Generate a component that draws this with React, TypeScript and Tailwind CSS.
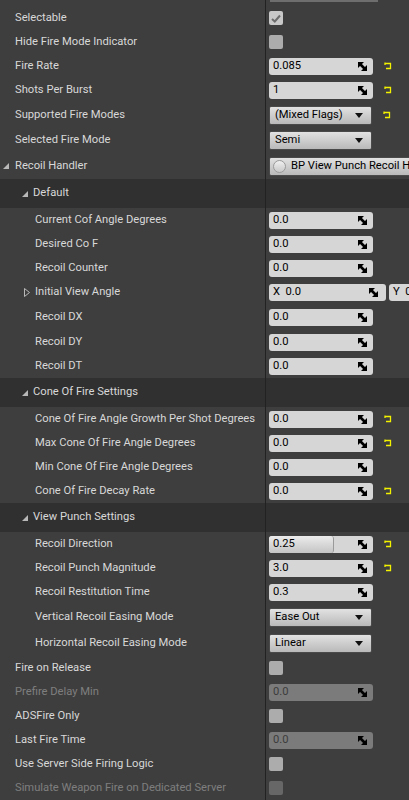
import React from "react";

type RowProps = {
    label?: string;
    indent?: number;
    disabled?: boolean;
    arrow?: "open" | "closed";
    height?: number;
    children?: React.ReactNode;
    reset?: boolean;
};

const font = { fontFamily: "Roboto, 'Noto Sans', sans-serif" };

const SpinIcon = () => (
    <svg width="9" height="9" viewBox="0 0 9 9" className="shrink-0">
        <polygon points="0,0 6,0 0,6" fill="#000" />
        <polygon points="9,9 3,9 9,3" fill="#000" />
        <line x1="1.5" y1="1.5" x2="7.5" y2="7.5" stroke="#000" strokeWidth="2.6" />
    </svg>
);

const ResetIcon = () => (
    <svg width="8" height="8" viewBox="0 0 8 8" className="shrink-0">
        <path d="M1 0.5 V3 M1 1.5 H6.5 V6.5 H2" fill="none" stroke="#f2f200" strokeWidth="1.3" />
    </svg>
);

const OpenArrow = () => (
    <svg width="6" height="6" viewBox="0 0 6 6" className="shrink-0">
        <polygon points="6,0 6,6 0,6" fill="#b8b8b8" />
    </svg>
);

const ClosedArrow = () => (
    <svg width="6" height="9" viewBox="0 0 6 9" className="shrink-0">
        <polygon points="0.5,0.5 5.5,4.5 0.5,8.5" fill="none" stroke="#b8b8b8" strokeWidth="1" />
    </svg>
);

const NumField = ({ value, disabled, fill }: { value: string; disabled?: boolean; fill?: number }) => (
    <div
        className={`relative flex items-center h-[17px] w-[104px] rounded-[3px] overflow-hidden ${disabled ? "bg-[#7b7b7b]" : "bg-[#d6d6d6]"}`}
    >
        {fill !== undefined && (
            <div
                className="absolute left-0 top-0 bottom-0 rounded-r-[3px] border-r border-[#9a9a9a] bg-gradient-to-b from-[#ececec] to-[#c4c4c4]"
                style={{ width: `${fill}px` }}
            />
        )}
        <span className={`relative pl-[4px] flex-1 text-[11.2px] ${disabled ? "text-[#3c3c3c]" : "text-black"}`}>{value}</span>
        <span className="relative pr-[6px] flex items-center">
            <SpinIcon />
        </span>
    </div>
);

const Dropdown = ({ value }: { value: string }) => (
    <div className="flex items-center h-[19px] w-[103px] rounded-[2px] border border-[#4a4a4a] bg-gradient-to-b from-[#e2e2e2] to-[#b9b9b9]">
        <span className="pl-[5px] flex-1 text-[11.2px] text-black">{value}</span>
        <svg width="8" height="5" viewBox="0 0 8 5" className="mr-[8px]">
            <polygon points="0,0 8,0 4,5" fill="#111" />
        </svg>
    </div>
);

const Check = ({ checked, disabled }: { checked?: boolean; disabled?: boolean }) => (
    <div
        className={`flex items-center justify-center w-[14px] h-[14px] rounded-[2px] ${disabled ? "bg-[#676767]" : checked ? "bg-[#c8c8c8]" : "bg-[#acacac]"}`}
    >
        {checked && (
            <svg width="10" height="9" viewBox="0 0 10 9">
                <path d="M1 5 L3.8 7.5 L9 1.5" fill="none" stroke="#6c6c6c" strokeWidth="2" />
            </svg>
        )}
    </div>
);

const Row = ({ label, indent = 15, disabled, arrow, height = 24, children, reset }: RowProps) => (
    <div className="flex bg-[#3e3e3e]" style={{ height }}>
        <div className="w-[265px] shrink-0 flex items-center" style={{ paddingLeft: indent }}>
            {arrow === "closed" && (
                <span className="-ml-[11px] mr-[5px] flex items-center">
                    <ClosedArrow />
                </span>
            )}
            {arrow === "open" && (
                <span className="-ml-[12px] mr-[6px] flex items-center">
                    <OpenArrow />
                </span>
            )}
            <span className={`text-[11.2px] whitespace-nowrap ${disabled ? "text-[#7e7e7e]" : "text-[#d8d8d8]"}`}>{label}</span>
        </div>
        <div className="w-px shrink-0 bg-[#222222]" />
        <div className="flex-1 flex items-center pl-[3px] whitespace-nowrap">
            {children}
            {reset && (
                <span className="ml-[11px] flex items-center">
                    <ResetIcon />
                </span>
            )}
        </div>
    </div>
);

const Category = ({ label }: { label: string }) => (
    <div className="flex h-[29px] bg-[#303030]">
        <div className="w-[265px] shrink-0 flex items-center pl-[22px]">
            <OpenArrow />
            <span className="ml-[5px] text-[11.2px] text-[#d8d8d8]">{label}</span>
        </div>
        <div className="w-px shrink-0 bg-[#222222]" />
        <div className="flex-1" />
    </div>
);

export default function App() {
    return (
        <div className="w-[409px] h-[800px] overflow-hidden bg-[#3e3e3e]" style={font}>
            {/* row cut off above */}
            <div className="flex h-[6px]">
                <div className="w-[265px] shrink-0" />
                <div className="w-px shrink-0 bg-[#222222]" />
                <div className="flex-1 pl-[4px]">
                    <div className="h-[2px] w-[108px] bg-[#6e6e6e]" />
                </div>
            </div>
            <Row label="Selectable"><Check checked /></Row>
            <Row label="Hide Fire Mode Indicator"><Check /></Row>
            <Row label="Fire Rate" reset><NumField value="0.085" /></Row>
            <Row label="Shots Per Burst" reset><NumField value="1" /></Row>
            <Row label="Supported Fire Modes" height={26} reset><Dropdown value="(Mixed Flags)" /></Row>
            <Row label="Selected Fire Mode" height={25}><Dropdown value="Semi" /></Row>
            <Row label="Recoil Handler" height={26} arrow="open">
                <div className="flex items-center h-[19px] w-[200px] shrink-0 rounded-[2px] border border-[#4a4a4a] bg-gradient-to-b from-[#e2e2e2] to-[#b9b9b9]">
                    <span className="ml-[3px] w-[13px] h-[13px] rounded-full border border-[#9a9a9a] bg-gradient-to-b from-[#f0f0f0] to-[#c8c8c8]" />
                    <span className="ml-[5px] text-[11.2px] text-black">BP View Punch Recoil Handler</span>
                </div>
            </Row>
            <Category label="Default" />
            <Row label="Current Cof Angle Degrees" indent={35}><NumField value="0.0" /></Row>
            <Row label="Desired Co F" indent={35}><NumField value="0.0" /></Row>
            <Row label="Recoil Counter" indent={35}><NumField value="0.0" /></Row>
            <Row label="Initial View Angle" indent={35} arrow="closed" height={25}>
                <div className="flex items-center h-[17px] w-[117px] shrink-0 rounded-[3px] bg-[#d6d6d6]">
                    <span className="pl-[4px] flex-1 text-[11.2px] text-black">X&nbsp;&nbsp;0.0</span>
                    <span className="pr-[8px] flex items-center"><SpinIcon /></span>
                </div>
                <div className="ml-[3px] flex items-center h-[17px] w-[117px] shrink-0 rounded-[3px] bg-[#d6d6d6]">
                    <span className="pl-[4px] flex-1 text-[11.2px] text-black">Y&nbsp;&nbsp;0.0</span>
                </div>
            </Row>
            <Row label="Recoil DX" indent={35} height={25}><NumField value="0.0" /></Row>
            <Row label="Recoil DY" indent={35}><NumField value="0.0" /></Row>
            <Row label="Recoil DT" indent={35}><NumField value="0.0" /></Row>
            <Category label="Cone Of Fire Settings" />
            <Row label="Cone Of Fire Angle Growth Per Shot Degrees" indent={35} reset><NumField value="0.0" /></Row>
            <Row label="Max Cone Of Fire Angle Degrees" indent={35} reset><NumField value="0.0" /></Row>
            <Row label="Min Cone Of Fire Angle Degrees" indent={35}><NumField value="0.0" /></Row>
            <Row label="Cone Of Fire Decay Rate" indent={35} reset><NumField value="0.0" /></Row>
            <Category label="View Punch Settings" />
            <Row label="Recoil Direction" indent={35} reset><NumField value="0.25" fill={65} /></Row>
            <Row label="Recoil Punch Magnitude" indent={35} reset><NumField value="3.0" /></Row>
            <Row label="Recoil Restitution Time" indent={35}><NumField value="0.3" /></Row>
            <Row label="Vertical Recoil Easing Mode" indent={35} height={26}><Dropdown value="Ease Out" /></Row>
            <Row label="Horizontal Recoil Easing Mode" indent={35} height={26}><Dropdown value="Linear" /></Row>
            <Row label="Fire on Release"><Check /></Row>
            <Row label="Prefire Delay Min" disabled><NumField value="0.0" disabled /></Row>
            <Row label="ADSFire Only"><Check /></Row>
            <Row label="Last Fire Time"><NumField value="0.0" disabled /></Row>
            <Row label="Use Server Side Firing Logic"><Check /></Row>
            <Row label="Simulate Weapon Fire on Dedicated Server" disabled><Check disabled /></Row>
        </div>
    );
}
